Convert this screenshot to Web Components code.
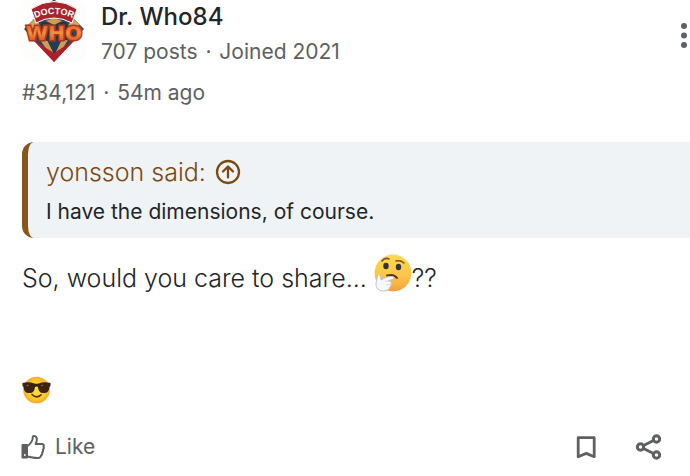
<!DOCTYPE html>
<html lang="en">
<head>
<meta charset="utf-8">
<meta name="viewport" content="width=device-width">
<title>Forum post</title>
<style>
body{margin:0;background:#fff;color:#22262a;font-family:Inter,"Noto Sans",sans-serif;font-weight:350;overflow-x:hidden}
</style>
</head>
<body>
<forum-post></forum-post>
<script>
class BaseElement extends HTMLElement{
  constructor(){super();this.attachShadow({mode:'open'}).innerHTML=this.constructor.markup;}
}
class UserAvatar extends BaseElement{
  static markup=`<style>:host{display:block;width:64px;height:64px}svg{display:block}</style>
  <svg width="64" height="64" viewBox="0 0 64 64" role="img" aria-label="Dr. Who84">
    <defs><linearGradient id="g" x2="0" y2="1"><stop stop-color="#e8491f"/><stop offset=".5" stop-color="#f5913c"/><stop offset="1" stop-color="#cf3418"/></linearGradient></defs>
    <rect width="64" height="62" rx="8" fill="#fdfdfc"/>
    <path d="M32-1 62 29 32 62 2 29Z" fill="#32475b"/>
    <path d="M7 24 14 18 18 26 8 29ZM57 24 50 18 46 26 56 29Z" fill="#d4a65a"/>
    <path d="M20 22 44 22 52 35 32 58 12 35Z" fill="#22374a"/>
    <path d="m24 21 8-3 8 3-8 4ZM18 40l8 1 6 13-3 2ZM46 40l-7 1-6 13 3 2Z" fill="#cf9c51"/>
    <path d="M10 39 32 53 54 39 32 62Z" fill="#ad2029"/>
    <path d="M25 40 39 40 32 54Z" fill="#253c58"/>
    <path d="M9 9Q32-6 55 9L50 23Q32 13 14 23Z" fill="#a8232c" stroke="#fff" stroke-width="1"/>
    <path id="arc" d="M11 19Q32 9 53 19" fill="none"/>
    <text font-family="Liberation Sans,sans-serif" font-size="9" font-weight="700" fill="#fff" text-anchor="middle"><textPath href="#arc" startOffset="50%">DOCTOR</textPath></text>
    <text x="32" y="40" text-anchor="middle" font-family="DejaVu Sans,sans-serif" font-size="20" font-weight="700" fill="url(#g)" stroke="#a8391f" stroke-width="3" paint-order="stroke">WHO</text>
  </svg>`;
}
customElements.define('user-avatar',UserAvatar);

class PostHeader extends BaseElement{
  static markup=`<style>
  :host{display:block;color:#5d6163;font-size:21px;font-weight:400;line-height:32px}
  header{display:flex;gap:15px;padding-left:22px}
  .who{flex:1;min-width:0}
  h2{margin:0;color:#222629;font-size:24px;line-height:34px;font-weight:500}
  p{margin:0}.joined{padding-top:2px}
  .meta{padding:9px 22px 0}
  .dot{margin:0 2px}
  a{color:inherit;text-decoration:none}
  button{align-self:flex-start;border:0;background:none;padding:20px 0 0;margin:0;color:#5d6163;width:12px}
  svg{display:block}
  </style>
  <header><user-avatar></user-avatar>
    <div class="who"><h2>Dr. Who84</h2><p class="joined">707 posts<span class="dot"> · </span>Joined 2021</p></div>
    <button type="button" aria-label="More options"><svg width="12" height="32" viewBox="0 0 12 32" fill="currentColor"><circle cx="6" cy="6" r="3"/><circle cx="6" cy="15.500" r="3"/><circle cx="6" cy="25" r="3"/></svg></button>
  </header>
  <p class="meta"><a href="#34121">#34,121</a><span class="dot"> · </span>54m ago</p>`;
}
customElements.define('post-header',PostHeader);

class PostQuote extends BaseElement{
  static markup=`<style>
  :host{display:block;margin:33px 0 0 22px}
  blockquote{margin:0;padding:12px 18px 8px;border-left:6px solid #87561c;border-radius:12px 0 0 12px;background:#eff3f6}
  a{display:flex;align-items:center;gap:9px;color:#7b4a13;font-size:25px;line-height:36px;text-decoration:none}
  p{margin:0;padding-top:4px;font-size:21px;font-weight:400;line-height:36px}
  </style>
  <blockquote><a href="#source"><span>yonsson said:</span><svg width="26" height="26" viewBox="0 0 26 26" fill="none" stroke="currentColor" stroke-width="2.300" stroke-linecap="round" stroke-linejoin="round" aria-hidden="true"><circle cx="13" cy="13" r="11"/><path d="M13 18.500V8M8 12.500l5-5 5 5"/></svg></a><p><slot></slot></p></blockquote>`;
}
customElements.define('post-quote',PostQuote);

class ThinkingFace extends BaseElement{
  static markup=`<style>:host{display:inline-block;width:38px;height:38px;vertical-align:-5px}svg{display:block}</style>
  <svg width="38" height="38" viewBox="0 0 38 38" role="img" aria-label="Thinking">
    <defs><linearGradient id="g" x2="0" y2="1"><stop stop-color="#ffd94f"/><stop offset=".55" stop-color="#fdc64a"/><stop offset="1" stop-color="#f4a13e"/></linearGradient></defs>
    <circle cx="19" cy="19" r="18.500" fill="url(#g)"/>
    <path d="M8 7q3-4 7-2M22 7q5-1 8 2" fill="none" stroke="#805124" stroke-width="1.600" stroke-linecap="round"/>
    <ellipse cx="12" cy="12" rx="2.700" ry="3.200" fill="#343239"/><ellipse cx="24.500" cy="13" rx="2.700" ry="3.200" fill="#343239"/>
    <path d="M13 21.500q7-2 10 2.500" fill="none" stroke="#59351f" stroke-width="2" stroke-linecap="round"/>
    <path d="M3.500 21c2-1 3 1 3.500 5 4-2.500 7-3.500 11-3.500 2.500 0 2.500 2.500 0 3l-4 1.200c3 .5 4 1.500 3.300 3 .5 1.300 0 2-1 2.300-.3 3-2.800 5-6.800 5-5 0-7.500-3-7.500-7 0-3 1.500-5 1.500-9Z" fill="#f7f8fa" stroke="#bdc5cf"/>
    <path d="M11 27.500l5-1M12 31l5-1" stroke="#ccd2da" stroke-width=".8"/>
  </svg>`;
}
customElements.define('thinking-face',ThinkingFace);

class CoolFace extends BaseElement{
  static markup=`<style>:host{display:block;width:29px;height:28px}svg{display:block}</style>
  <svg width="29" height="28" viewBox="0 0 29 28" role="img" aria-label="Smiling with sunglasses">
    <defs><radialGradient id="g"><stop stop-color="#ffe13a"/><stop offset=".65" stop-color="#fecb2f"/><stop offset="1" stop-color="#f4ac26"/></radialGradient></defs>
    <circle cx="14.500" cy="14" r="13.300" fill="url(#g)"/>
    <path d="M.5 7q6-1.500 12 .5 2 .5 4 0 6-2 12-.5v3l-1 .7c-.5 5-2.500 6.300-6 6.300s-5-2-5.500-6q-1.500-1-3 0c-.5 4-2 6-5.500 6s-5.500-1.300-6-6.300L.5 10Z" fill="#3b2314"/>
    <path d="M4.500 10l2-1M19 10l2-1" stroke="#8d653f" stroke-width="1.200"/>
    <path d="M10 18.500q4.500 4.500 9 .3" fill="none" stroke="#52321a" stroke-width="1.700" stroke-linecap="round"/>
  </svg>`;
}
customElements.define('cool-face',CoolFace);

class PostActions extends BaseElement{
  static markup=`<style>
  :host{display:flex;align-items:center;color:#5d6163;padding:27px 27px 0 20px}
  button{display:flex;align-items:center;gap:10px;padding:0;border:0;background:none;color:inherit;font:400 21px/32px Inter,"Noto Sans",sans-serif}
  .save{margin-left:auto}.share{margin-left:37px}svg{display:block}
  </style>
  <button type="button"><svg width="25" height="28" viewBox="0 0 25 28" fill="none" stroke="currentColor" stroke-width="2" stroke-linejoin="round" aria-hidden="true"><path d="M2.500 12H7v12.500H2.500Z" fill="currentColor"/><circle cx="4.800" cy="22" r=".9" fill="#fff" stroke="none"/><path d="M7 13c3-1 4.500-4 5.500-6.500.3-2-.2-3.500 1.300-3.500 3 0 4 3 1.900 8H22c1.500 0 2.200 1 1.500 2.500.5 1 .3 2.300-.5 3 .3 1.200 0 2.300-.8 3 .3 1.300-.2 2.500-1.200 3-.2 1.700-1.200 2.500-3 2.500-4 0-7-1-11-1.500"/></svg><span>Like</span></button>
  <button type="button" class="save" aria-label="Bookmark"><svg width="24" height="28" viewBox="0 0 24 28" fill="none" stroke="currentColor" stroke-width="2.800" stroke-linejoin="round"><path d="M4.200 4.700h16v19l-8-3.300-8 3.300Z"/></svg></button>
  <button type="button" class="share" aria-label="Share"><svg width="28" height="28" viewBox="0 0 28 28" fill="none" stroke="currentColor" stroke-width="3"><circle cx="5.500" cy="14" r="3.200"/><circle cx="21.500" cy="6" r="3.200"/><circle cx="21.500" cy="22" r="3.200"/><path d="m8.500 12.500 10-5M8.500 15.500l10 5"/></svg></button>`;
}
customElements.define('post-actions',PostActions);

class ForumPost extends BaseElement{
  static markup=`<style>
  :host{display:block}
  .body{padding:16px 22px 0}
  .body p{margin:0;font-size:25px;line-height:40px}
  cool-face{margin-top:78px}
  </style>
  <article><post-header></post-header>
  <post-quote>I have the dimensions, of course.</post-quote>
  <div class="body"><p>So, would you care to share... <thinking-face></thinking-face>??</p><cool-face></cool-face></div>
  <post-actions></post-actions></article>`;
}
customElements.define('forum-post',ForumPost);
</script>
</body>
</html>
